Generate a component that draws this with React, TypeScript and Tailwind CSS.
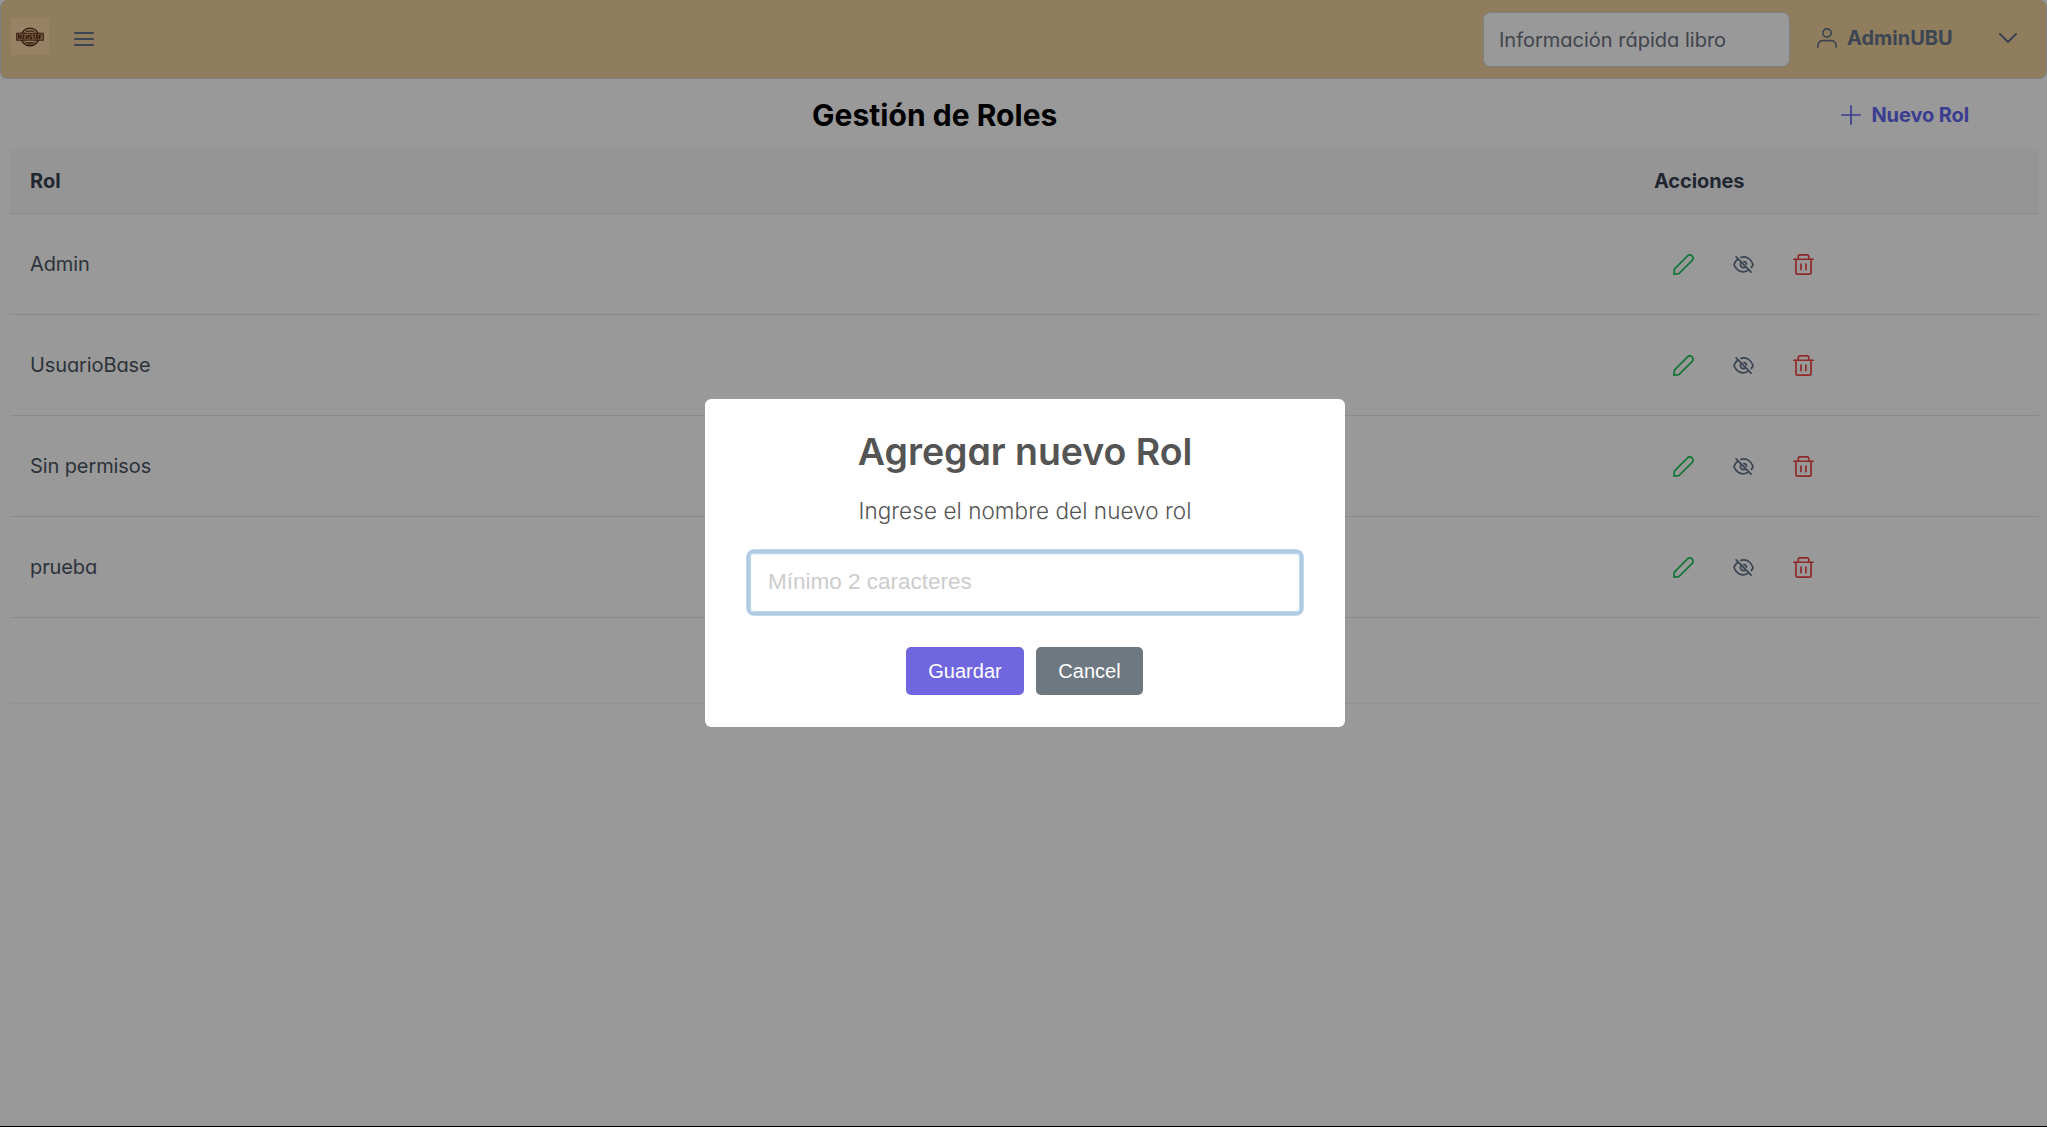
import React from "react";

const stroke = { fill: "none", stroke: "currentColor", strokeLinecap: "round", strokeLinejoin: "round" } as const;

function Pencil() {
  return (
    <svg viewBox="0 0 20 20" width="21" height="21" {...stroke} strokeWidth="1.7" className="text-[#22c55e]">
      <path d="M0.9 19.1 L1.3 14.3 L13.8 1.8 C15.1 0.5 16.8 0.5 18.1 1.8 C19.5 3.2 19.5 4.9 18.1 6.2 L5.6 18.7 Z" />
    </svg>
  );
}

function EyeSlash() {
  return (
    <svg viewBox="0 0 20 20" width="21" height="21" {...stroke} strokeWidth="1.7" className="text-[#64748b]">
      <path d="M3 2.8 L17.2 17.2" />
      <path d="M7.6 3.2 C12.8 1.8 17 4.8 19.1 10 C18.8 11.1 18.2 12 17.5 12.8" />
      <path d="M4.3 5.2 C2.7 6.4 1.5 8 0.9 10 C3.4 16.4 8.9 18.6 14 15.8" />
      <path d="M7.4 8.5 C6 11.3 8.6 13.9 11.4 12.6" />
      <path d="M10.4 7.2 C11.7 7.3 12.7 8.3 12.8 9.6" />
    </svg>
  );
}

function Trash() {
  return (
    <svg viewBox="0 0 20 20" width="21" height="21" {...stroke} strokeWidth="1.6" className="text-[#ef4444]">
      <path d="M0.8 5 H19.2" />
      <path d="M2.8 5 V17.6 Q2.8 19.2 4.4 19.2 H15.6 Q17.2 19.2 17.2 17.6 V5" />
      <path d="M5 5 V2.4 Q5 0.8 6.6 0.8 H13.4 Q15 0.8 15 2.4 V5" />
      <path d="M7.6 9.5 V14.8 M12.3 9.5 V14.8" />
    </svg>
  );
}

function Logo() {
  return (
    <div className="flex h-[37px] w-[38px] items-center justify-center bg-[#fdd9a8]">
      <svg viewBox="0 0 28 20" width="28" height="20" fill="none" stroke="#4f2410">
        <circle cx="14" cy="10" r="8.9" strokeWidth="1.3" />
        <circle cx="14" cy="10" r="7" strokeWidth="0.5" />
        <path d="M10 4.3 H18 M9.5 15.6 H18.5 M11.5 17 H16.5" strokeWidth="0.9" />
        <rect x="0.7" y="6.2" width="26.6" height="7" fill="#c0946a" strokeWidth="0.9" />
        <path d="M2.6 12 V7.6 L5 11.8 V7.6 M7 8 V12 M7 8 H8.6 M7 10 H8.4 M7 11.7 H8.6 M10.2 12 V8 M10.2 10 H12.2 M12.2 8 V12 M15.6 8 H13.8 V10 H15.6 V11.8 H13.8 M17 8 H19 M18 8 V12 M20.4 8 H22 V11.7 H20.4 Z M23.6 8 V12 M23.6 8 H25.6 M23.6 10 H25.2" strokeWidth="1" />
      </svg>
    </div>
  );
}

const roles = ["Admin", "UsuarioBase", "Sin permisos", "prueba"];

export default function App() {
  return (
    <div className="relative h-[1127px] w-[2047px] overflow-hidden bg-white text-[20px] leading-[30px] text-[#4b5563] [font-family:Inter,'Liberation_Sans',sans-serif] [font-feature-settings:'cv02','cv03','cv04','cv11']">
      <header className="flex h-[79px] items-center rounded-[7.5px] border border-t-0 border-[#d1d5db] bg-[#eed09b] pl-[10px]">
        <div className="-mt-[5px]">
          <Logo />
        </div>
        <svg viewBox="0 0 20 16" width="20" height="16" {...stroke} strokeWidth="2" className="ml-[25px] text-[#64748b]">
          <path d="M1 2 H19 M1 8 H19 M1 14 H19" />
        </svg>
        <input
          className="mt-px ml-auto h-[55px] w-[307px] rounded-[7.5px] border border-[#d1d5db] bg-white px-[15px] pt-px placeholder:text-[#6b7280]"
          placeholder="Información rápida libro"
        />
        <div className="-mt-px ml-[27px] flex w-[200px] items-center font-bold text-[#64748b]">
          <svg viewBox="0 0 20 20" width="20" height="20" {...stroke} strokeWidth="1.7" className="-mt-px">
            <circle cx="10" cy="5" r="4.1" />
            <path d="M0.9 19.1 V17.4 C0.9 14.3 3.6 12.6 6 12.6 H14 C16.4 12.6 19.1 14.3 19.1 17.4 V19.1" />
          </svg>
          <span className="-mt-[2px] ml-[10px]">AdminUBU</span>
          <svg viewBox="0 0 18 10" width="18" height="10" {...stroke} strokeWidth="2" className="-mt-px ml-auto">
            <path d="M1 1 L9 9 L17 1" />
          </svg>
        </div>
        <div className="w-[29px]" />
      </header>

      <main className="pr-[8px] pl-[10px]">
        <div className="flex h-[70px] items-center pt-[2px]">
          <h1 className="ml-[802px] text-[30px] font-bold tracking-[0.03px] text-black">Gestión de Roles</h1>
          <button className="mr-[70px] ml-auto flex items-center gap-[10px] font-bold text-[#6366f1]">
            <svg viewBox="0 0 20 20" width="20" height="20" {...stroke} strokeWidth="1.7">
              <path d="M0.9 10 H19.1 M10 0.9 V19.1" />
            </svg>
            <span className="tracking-[-0.1px]">Nuevo Rol</span>
          </button>
        </div>
        <div className="flex h-[65px] items-center border-b border-[#e5e7eb] bg-[#f8f9fb] font-bold text-[#374151]">
          <div className="w-[1624px] pl-5">Rol</div>
          <div className="pl-5 tracking-[-0.1px]">Acciones</div>
        </div>
        {roles.map((r) => (
          <div key={r} className="flex h-[101px] items-center border-b border-[#e5e7eb]">
            <div className="w-[1624px] pl-5 tracking-[-0.1px]">{r}</div>
            <div className="flex gap-[39px] pl-[39px]">
              <Pencil />
              <EyeSlash />
              <Trash />
            </div>
          </div>
        ))}
        <div className="h-[86px] border-b border-[#f3f4f6]" />
      </main>

      <div className="absolute inset-0 flex items-start justify-center bg-black/40 pt-[399px] pl-[3px]">
        <section className="flex h-[328px] w-[640px] flex-col items-center rounded-[6.25px] bg-white text-[#545454]">
          <h2 className="mt-[30px] text-[37.5px] leading-[46px] font-semibold tracking-[-0.05px]">Agregar nuevo Rol</h2>
          <p className="mt-[19px] text-[22.5px] leading-[34px] font-light tracking-[0.06px]">Ingrese el nombre del nuevo rol</p>
          <input
            className="mt-[25px] h-[59px] w-[550px] rounded-[4px] border border-[#b4dbed] px-[17px] pb-px text-[22.5px] shadow-[inset_0_1px_1px_rgba(0,0,0,0.06),0_0_0_3.75px_rgba(100,150,200,0.5)] outline-none [font-family:'Liberation_Sans',Arial,sans-serif] placeholder:text-[#cccccc]"
            placeholder="Mínimo 2 caracteres"
          />
          <div className="mt-[35px] mr-[2px] flex gap-3 text-[20px] text-white [font-family:'Liberation_Sans',Arial,sans-serif]">
            <button className="h-12 w-[118px] rounded-[5px] bg-[#7066e0] pl-px">Guardar</button>
            <button className="h-12 w-[107px] rounded-[5px] bg-[#6e7881] pl-px">Cancel</button>
          </div>
        </section>
      </div>
      <div className="absolute inset-x-0 bottom-0 h-px bg-black" />
    </div>
  );
}
